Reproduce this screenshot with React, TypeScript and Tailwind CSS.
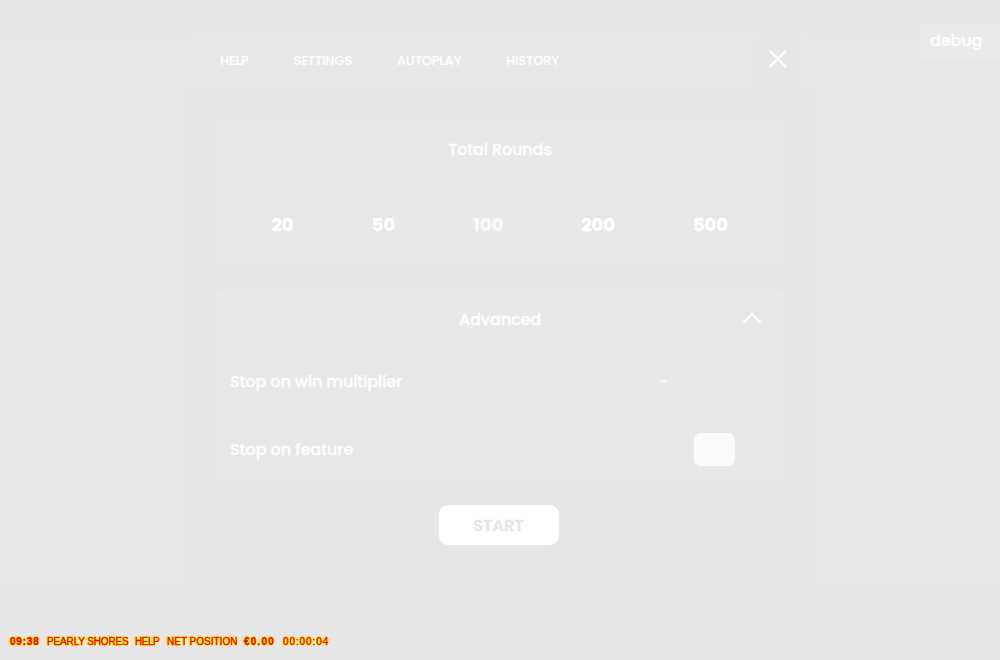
import type { ReactNode } from "react";

function Tab({ children, className }: { children: ReactNode; className: string }) {
  return (
    <button className={`h-[42px] shrink-0 rounded-lg pt-[2px] text-left text-[13px] font-medium whitespace-nowrap text-[#fdfdfd] [-webkit-text-stroke:0.2px_#fdfdfd] ${className}`}>
      {children}
    </button>
  );
}

function Round({ children, className }: { children: ReactNode; className: string }) {
  return (
    <button className={`flex h-[50px] items-center justify-center rounded-lg text-[18px] font-bold [-webkit-text-stroke:0.3px_currentColor] ${className}`}>
      {children}
    </button>
  );
}

function Status({ children, className }: { children: ReactNode; className: string }) {
  return <span className={`shrink-0 whitespace-nowrap ${className}`}>{children}</span>;
}

export default function App() {
  return (
    <div className="relative flex h-[660px] w-[1000px] flex-col overflow-hidden bg-[#e6e6e6] font-['Poppins','Inter',sans-serif] text-[#fdfdfd]">
      <main className="flex h-[588px] flex-col bg-[linear-gradient(to_bottom,#e6e6e6_33px,#e7e7e7_33px)] px-[191px] pt-[30px]">
        <section className="flex h-[558px] w-[618px] flex-col bg-[#e6e6e6]">
          <header className="flex h-[59px] shrink-0 items-start bg-[#e7e7e7] pt-[9px]">
            <nav className="flex w-[565px] pl-[11px]">
              <Tab className="w-[74px] pl-[18px] tracking-[-0.25px]">HELP</Tab>
              <Tab className="w-[101px] pl-[17.5px] tracking-[-0.18px]">SETTINGS</Tab>
              <Tab className="w-[104px] bg-[#e8e8e8] pl-[20px] tracking-[-0.2px]">AUTOPLAY</Tab>
              <Tab className="w-[102px] pl-[25px] tracking-[-0.15px]">HISTORY</Tab>
            </nav>
            <button aria-label="Close" className="flex h-[44px] w-[44px] justify-center rounded-lg bg-[#e6e6e6] pt-[10px] pr-px">
              <svg width="20" height="20" viewBox="0 0 20 20" fill="none" stroke="#fff" strokeWidth="2.2">
                <path d="M1.5 1.5l16.5 16.5M18 1.5L1.5 18" />
              </svg>
            </button>
          </header>

          <div className="flex flex-col items-center pt-[31px]">
            <div className="h-[151px] w-[570px] overflow-hidden rounded-lg bg-[#e7e7e7]">
              <h2 className="flex h-[60px] items-center justify-center bg-[#e8e8e8] text-[16px] font-medium [-webkit-text-stroke:0.3px_#fdfdfd]">
                <span className="tracking-[-0.13px]">Total Rounds</span>
              </h2>
              <div className="flex pt-[19px] pl-[17px]">
                <Round className="w-[101px] text-white">20</Round>
                <Round className="w-[101px] text-white">50</Round>
                <Round className="mx-[2px] w-[104px] bg-[#e8e8e8] text-[#f9f9f9]">100</Round>
                <Round className="w-[112px] text-white">200</Round>
                <Round className="w-[113px] text-white">500</Round>
              </div>
            </div>

            <div className="mt-[19px] h-[194px] w-[570px] overflow-hidden rounded-lg bg-[#e7e7e7]">
              <h2 className="flex h-[61px] items-center bg-[#e8e8e8] pl-[229px] text-[16px] font-medium [-webkit-text-stroke:0.3px_#fdfdfd]">
                <span className="w-[112px] pb-[2px] text-center tracking-[-0.1px]">Advanced</span>
                <button aria-label="Collapse" className="ml-[174px] flex h-[44px] w-[44px] items-center justify-center rounded-lg bg-[#e7e7e7] pb-[6px]">
                  <svg width="20" height="12" viewBox="0 0 20 12" fill="none" stroke="#fff" strokeWidth="2.4" strokeLinecap="round">
                    <path d="M2 10l8-8 8 8" />
                  </svg>
                </button>
              </h2>
              <div className="flex h-[61px] items-center justify-between pr-[4px] pl-[15px]">
                <span className="text-[16px] font-medium tracking-[-0.1px] [-webkit-text-stroke:0.3px_#fdfdfd]">Stop on win multiplier</span>
                <div className="flex h-[44px] w-[134px] items-center rounded-lg bg-[#e8e8e8] pl-[11.5px] text-[16px] font-medium">-</div>
              </div>
              <div className="mt-[7px] flex h-[61px] items-center justify-between pr-[4px] pl-[15px]">
                <span className="text-[16px] font-medium tracking-[-0.05px] [-webkit-text-stroke:0.3px_#fdfdfd]">Stop on feature</span>
                <button role="switch" aria-checked="false" aria-label="Stop on feature" className="flex h-[41px] w-[90px] items-center rounded-lg bg-[#e8e8e8] pl-[3px]">
                  <span className="h-[33px] w-[41px] rounded-[7px] bg-[#fbfbfb]" />
                </button>
              </div>
            </div>

            <button className="mt-[21px] mr-[2px] h-[40px] w-[120px] rounded-[9px] bg-white pt-px pr-px text-[16px] font-semibold tracking-[0.15px] text-[#e5e5e5] [-webkit-text-stroke:0.3px_#e5e5e5]">
              START
            </button>
          </div>
        </section>
      </main>

      <footer className="flex h-[72px] items-start pt-[46px] pl-[10px] font-['Liberation_Sans',sans-serif] text-[10px] leading-[15px] text-[#ff0000] [-webkit-text-stroke:0.4px_#ff0000] [text-shadow:1px_0_#ff0,-1px_0_#ff0,0_1px_#ff0,0_-1px_#ff0]">
        <Status className="w-[37px] font-bold tracking-[0.8px]">09:38</Status>
        <Status className="w-[88px] tracking-[-0.15px]">PEARLY SHORES</Status>
        <Status className="w-[32px] tracking-[-0.5px]">HELP</Status>
        <Status className="w-[77px]">NET POSITION</Status>
        <Status className="w-[39px] font-bold tracking-[1.2px]">€0.00</Status>
        <Status className="tracking-[0.9px]">00:00:04</Status>
      </footer>

      <button className="absolute top-[23px] right-0 h-[36px] w-[80px] bg-[#eaeaea] pl-[10px] text-left text-[16px] font-medium tracking-[-0.1px] [-webkit-text-stroke:0.2px_#fdfdfd]">
        debug
      </button>
    </div>
  );
}
